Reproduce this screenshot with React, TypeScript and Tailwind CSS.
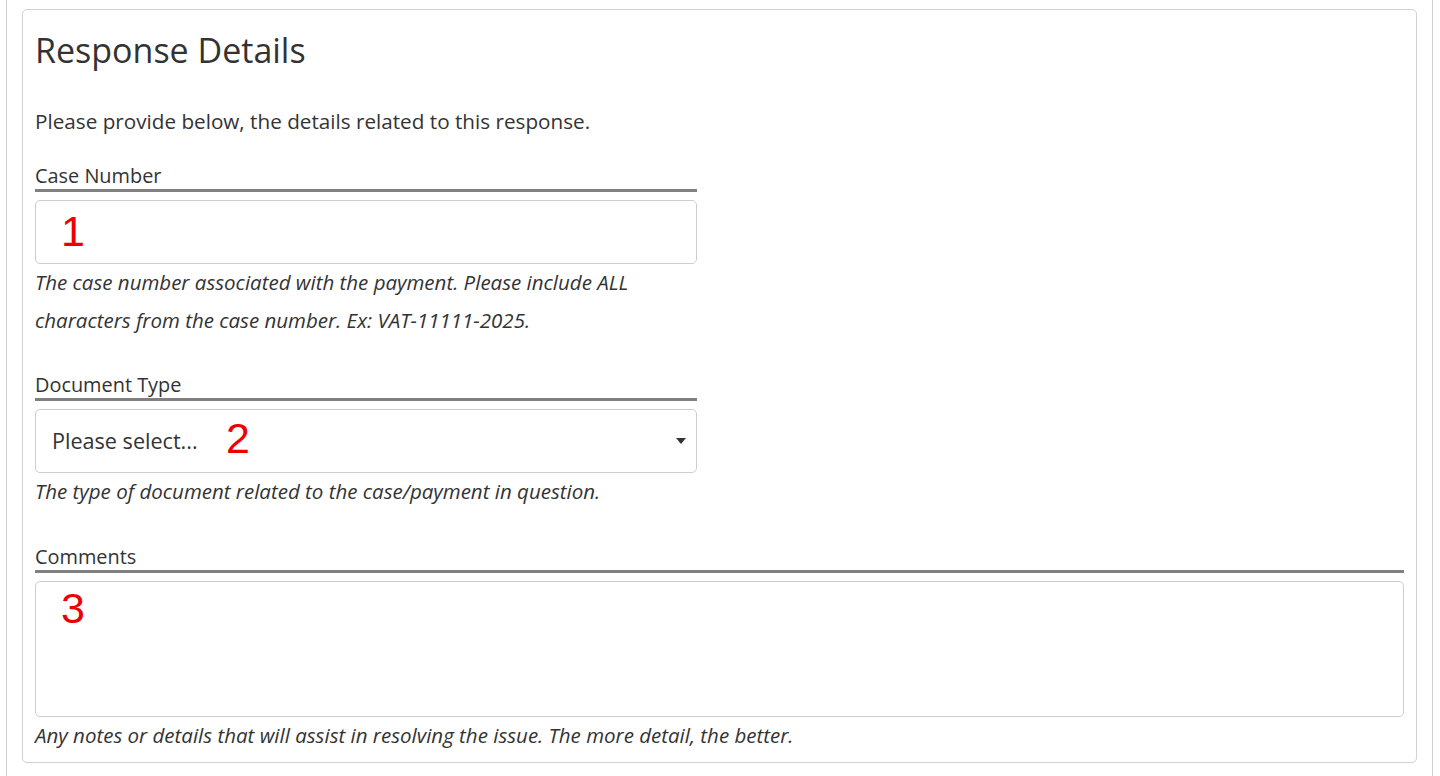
const sans = "font-['Open_Sans','Noto_Sans',sans-serif]";

function Label({ text, wide }: { text: string; wide?: boolean }) {
  return (
    <div
      className={`${wide ? "w-full" : "w-[662px]"} border-b-[3px] border-[#808080] text-[19.9px] leading-[26px] text-[#333]`}
    >
      {text}
    </div>
  );
}

function Help({ children }: { children: React.ReactNode }) {
  return <p className="text-[20.5px] italic leading-[37.5px] text-[#333]">{children}</p>;
}

function Marker({ n, className }: { n: string; className: string }) {
  return (
    <span
      className={`absolute font-['Liberation_Sans',Arial,sans-serif] text-[43px] leading-none text-[#ee0000] ${className}`}
    >
      {n}
    </span>
  );
}

export default function App() {
  return (
    <div className={`h-[776px] bg-white pl-[6px] ${sans}`}>
      <div className="h-full w-[1427px] border-x border-[#cfcfcf] px-[15px] pt-[9px]">
        <section className="rounded-[5px] border border-[#d2d2d2] px-[12px] pt-[20px] pb-[8px]">
          <h2 className="text-[34px] font-normal leading-[40px] text-[#333]">Response Details</h2>
          <p className="mt-[36px] text-[20.7px] leading-[30px] text-[#333]">
            Please provide below, the details related to this response.
          </p>

          {/* case number */}
          <div className="mt-[27px] w-[662px]">
            <Label text="Case Number" />
            <div className="relative mt-[8px] h-[64px] rounded-[5px] border border-[#cdcdcd] bg-white">
              <Marker n="1" className="left-[25px] top-[9px]" />
            </div>
            <Help>
              The case number associated with the payment. Please include ALL characters from the case number. Ex:
              VAT-11111-2025.
            </Help>
          </div>

          {/* document type */}
          <div className="mt-[33px] w-[662px]">
            <Label text="Document Type" />
            <div className="relative mt-[8px] flex h-[64px] items-center justify-between rounded-[5px] border border-[#cdcdcd] bg-white pl-[16px] pr-[10px]">
              <span className="text-[21.6px] text-[#333]">Please select...</span>
              <svg width="10" height="6" viewBox="0 0 10 6" className="mt-[-1px]">
                <path d="M0 0h10L5 6z" fill="#333" />
              </svg>
              <Marker n="2" className="left-[190px] top-[7px]" />
            </div>
            <Help>The type of document related to the case/payment in question.</Help>
          </div>

          {/* comments */}
          <div className="mt-[33px]">
            <Label text="Comments" wide />
            <div className="relative mt-[8px] h-[136px] rounded-[5px] border border-[#cdcdcd] bg-white">
              <Marker n="3" className="left-[25px] top-[5px]" />
            </div>
            <Help>Any notes or details that will assist in resolving the issue. The more detail, the better.</Help>
          </div>
        </section>
      </div>
    </div>
  );
}
